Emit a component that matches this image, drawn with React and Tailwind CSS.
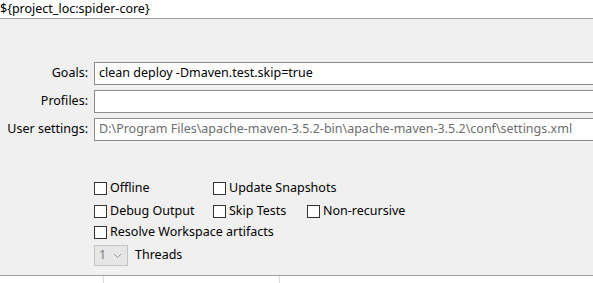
import React from 'react';

const Field = ({ label, value, muted }) => (
  <div className="flex items-center h-[23px]">
    <div className="w-[89px] text-right pr-[1px] whitespace-nowrap">{label}</div>
    <div
      className={`ml-[5px] flex-1 h-[23px] border border-[#8c8c8c] border-r-0 bg-white flex items-center pl-[4px] whitespace-nowrap ${muted ? 'text-[#6d6d6d]' : 'text-black'}`}
    >
      {value}
    </div>
  </div>
);

const Check = ({ label, w }) => (
  <div className={`flex items-center whitespace-nowrap ${w}`}>
    <div className="w-[13px] h-[13px] border border-[#333] bg-white shrink-0" />
    <span className="ml-[3px]">{label}</span>
  </div>
);

const App = () => {
  return (
    <div
      className="w-[593px] h-[283px] bg-[#f0f0f0] overflow-hidden flex flex-col text-[12.5px] text-black"
      style={{ fontFamily: '"Noto Sans", "Open Sans", sans-serif' }}
    >
      <div className="h-[19px] bg-white border-b border-[#a0a0a0] flex items-center leading-none">
        ${'{'}project_loc:spider-core{'}'}
      </div>

      <div className="mt-[43px] flex flex-col gap-[5px]">
        <Field label="Goals:" value="clean deploy -Dmaven.test.skip=true" />
        <Field label="Profiles:" value="" />
        <Field
          label="User settings:"
          value="D:\Program Files\apache-maven-3.5.2-bin\apache-maven-3.5.2\conf\settings.xml"
          muted
        />
      </div>

      <div className="mt-[36px] pl-[94px] flex flex-col">
        <div className="flex h-[23px] items-center">
          <Check label="Offline" w="w-[119px]" />
          <Check label="Update Snapshots" w="w-[94px]" />
        </div>
        <div className="flex h-[22px] items-center">
          <Check label="Debug Output" w="w-[119px]" />
          <Check label="Skip Tests" w="w-[94px]" />
          <Check label="Non-recursive" w="" />
        </div>
        <div className="flex h-[21px] items-center">
          <Check label="Resolve Workspace artifacts" w="" />
        </div>
        <div className="flex items-center mt-[2px] h-[21px]">
          <div className="w-[34px] h-[21px] border border-[#c4c4c4] bg-[#e6e6e6] flex items-center justify-between px-[4px] text-[#7a7a7a]">
            <span>1</span>
            <svg width="9" height="6" viewBox="0 0 9 6" className="mr-[1px]">
              <path d="M1 1 L4.5 4.5 L8 1" fill="none" stroke="#9a9a9a" strokeWidth="1" />
            </svg>
          </div>
          <span className="ml-[7px]">Threads</span>
        </div>
      </div>

      <div className="mt-auto h-[8px] bg-white border-t border-[#a0a0a0] flex">
        <div className="w-[104px] border-r border-[#d9d9d9]" />
        <div className="w-[176px] border-r border-[#d9d9d9]" />
      </div>
    </div>
  );
};

export default App;
